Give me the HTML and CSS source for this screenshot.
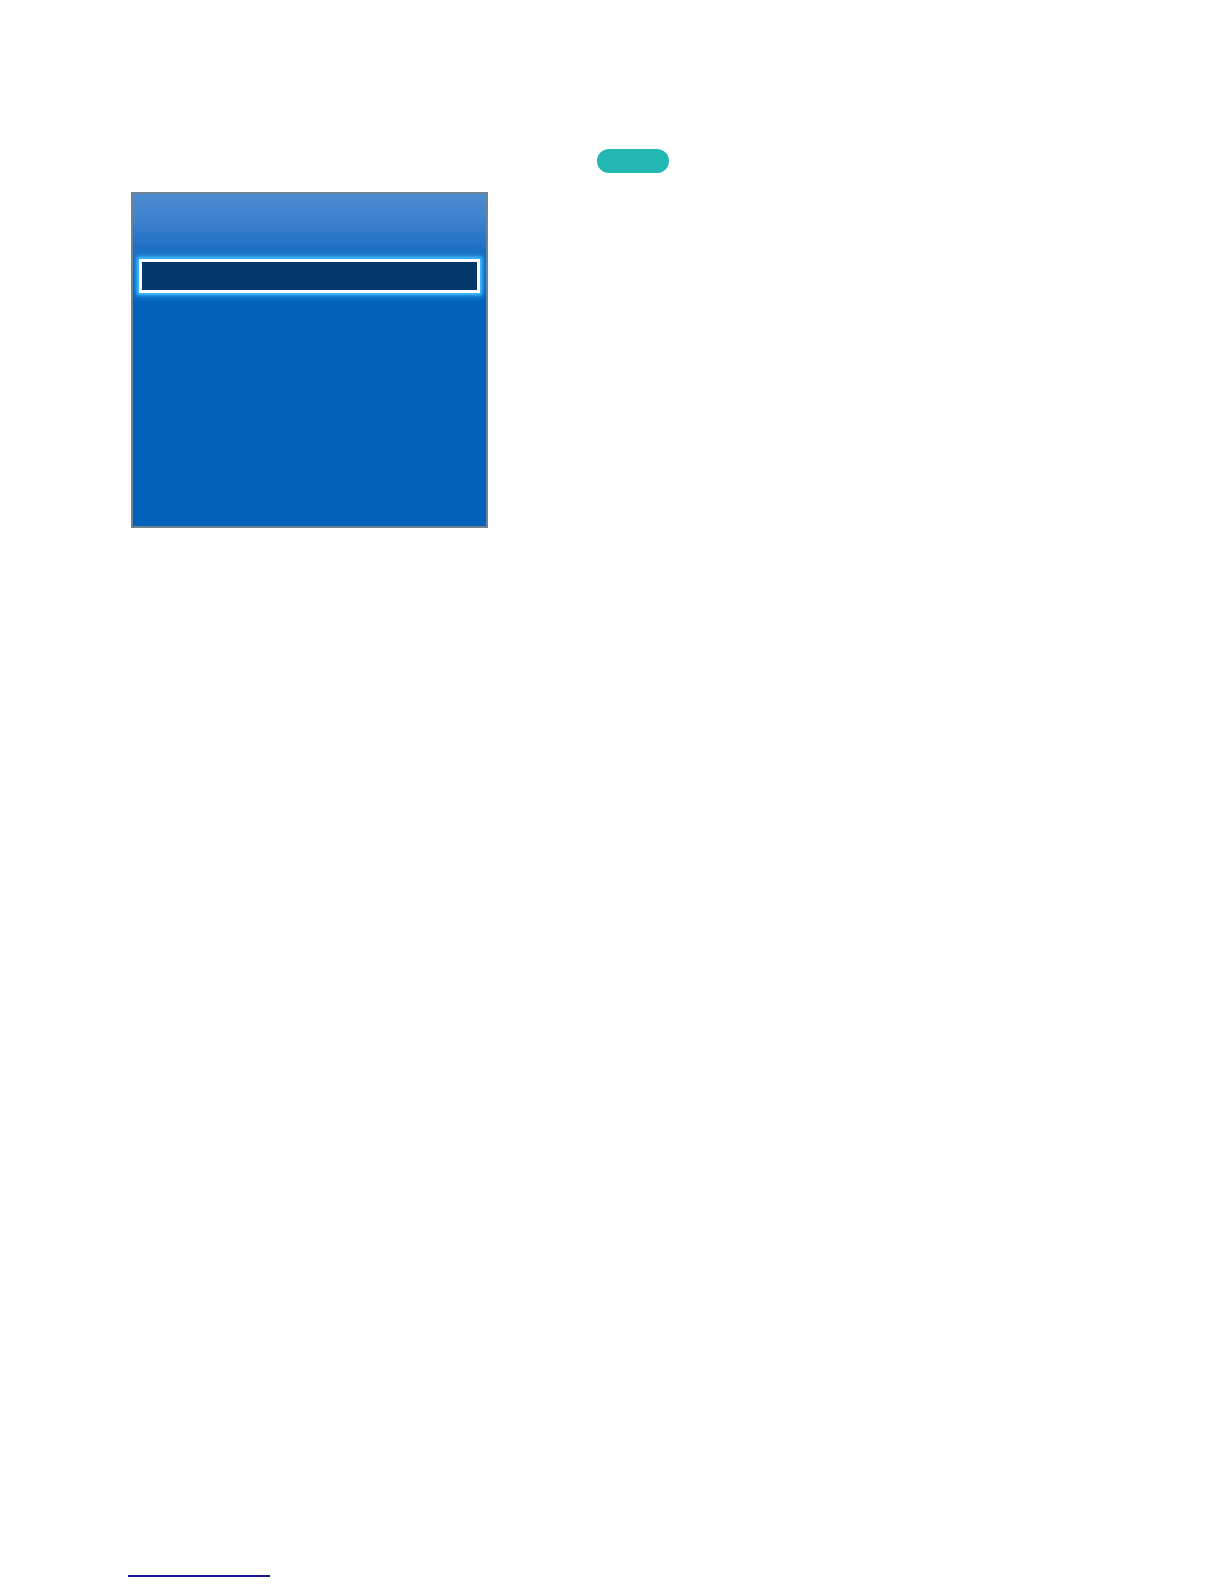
FILE: index.html
```html
<!DOCTYPE html>
<html lang="en">
<head>
<meta charset="utf-8">
<title>Menu</title>
<link rel="stylesheet" href="styles.css">
</head>
<body>
<div class="page">
  <div class="top-row">
    <span class="pill"></span>
  </div>
  <div class="panel">
    <div class="panel-head"></div>
    <div class="menu">
      <div class="menu-item selected"></div>
    </div>
  </div>
  <div class="footer">
    <span class="link-line"></span>
  </div>
</div>
</body>
</html>
```
FILE: styles.css
```css
html, body {
  margin: 0;
  padding: 0;
  background: #ffffff;
  font-family: "Liberation Sans", Arial, sans-serif;
}
.page {
  width: 1224px;
  height: 1584px;
  display: flex;
  flex-direction: column;
  box-sizing: border-box;
  padding-top: 149px;
}
.top-row {
  display: flex;
  padding-left: 597px;
  height: 24px;
}
.pill {
  display: block;
  width: 72px;
  height: 24px;
  border-radius: 12px;
  background: #22b8b1;
}
.panel {
  margin-top: 19px;
  margin-left: 131px;
  width: 357px;
  height: 336px;
  box-sizing: border-box;
  border: 2px solid #6f8194;
  background: linear-gradient(to bottom, #4b8bd0 0px, #3f82cd 25px, #2272c6 50px, #0f67be 68px, #0461b9 100px, #0461b9 100%);
  display: flex;
  flex-direction: column;
}
.panel-head {
  height: 65px;
}
.menu {
  padding: 0 6px 0 6px;
}
.menu-item {
  height: 34px;
}
.menu-item.selected {
  box-sizing: border-box;
  border: 3px solid #ffffff;
  background: #04386b;
  box-shadow: 0 0 3px 2px #3fc0ff, 0 0 7px 3px rgba(60, 180, 255, 0.55);
}
.footer {
  margin-top: auto;
  padding-left: 128px;
  padding-bottom: 7px;
}
.link-line {
  display: block;
  width: 142px;
  height: 0;
  border-bottom: 2px solid #1a1a8c;
}
```
